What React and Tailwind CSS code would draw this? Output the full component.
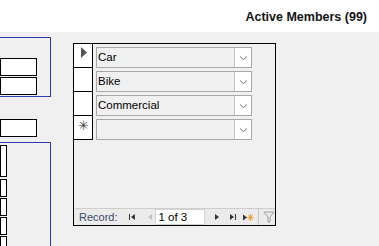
import React from "react";

const Combo = ({ text }) => (
  <div className="mt-[3px] ml-[3px] w-[156px] h-[21px] border border-[#a8a8a8] bg-[#f0f0f0] flex">
    <div className="flex-1 pl-[1px] text-[11.5px] leading-[19px] text-black truncate">{text}</div>
    <div className="w-[17px] h-full border-l border-[#c4c4c4] bg-white flex items-center justify-center">
      <svg width="9" height="6" viewBox="0 0 9 6">
        <path d="M1 1.5 L4.5 4.5 L8 1.5" fill="none" stroke="#7a7a7a" strokeWidth="1" />
      </svg>
    </div>
  </div>
);

const Selector = ({ children }) => (
  <div className="h-[24px] border-b border-black bg-white flex items-start justify-center pt-[3px]">{children}</div>
);

export default function App() {
  return (
    <div className="w-[379px] h-[246px] overflow-hidden bg-[#f0f0f0] font-['Liberation_Sans',Arial,sans-serif]">
      <div className="h-[32px] bg-white flex justify-end pr-[12px] pt-[10px]">
        <span className="text-[12.5px] font-bold leading-[14px] text-[#141414]">Active Members (99)</span>
      </div>
      <div className="flex">
        {/* left column */}
        <div className="w-[51px] pt-[5px] flex flex-col">
          <div className="h-[60px] border-y border-r border-[#2f3cae] pt-[20px]">
            <div className="w-[37px] h-[18px] border border-black bg-white" />
            <div className="mt-[1px] w-[37px] h-[18px] border border-black bg-white" />
          </div>
          <div className="mt-[22px] w-[37px] h-[18px] border border-black bg-white" />
          <div className="mt-[5px] h-[120px] border-t border-r border-[#2f3cae] pt-[2px] flex flex-col gap-[2px]">
            <div className="w-[7px] h-[32px] border border-black bg-white" />
            <div className="w-[7px] h-[18px] border border-black bg-white" />
            <div className="-mt-[1px] w-[7px] h-[18px] border border-black bg-white" />
            <div className="-mt-[1px] w-[7px] h-[18px] border border-black bg-white" />
            <div className="-mt-[1px] w-[7px] h-[18px] border border-black bg-white" />
          </div>
        </div>
        {/* subform */}
        <div className="ml-[22px] mt-[11px] w-[203px] h-[183px] border border-black flex flex-col">
          <div className="flex-1 flex">
            <div className="w-[19px] border-r border-black self-start">
              <Selector>
                <svg width="8" height="11" viewBox="0 0 8 11" className="ml-[1px]">
                  <path d="M1 0 L7 5.5 L1 11 Z" fill="#555" />
                </svg>
              </Selector>
              <Selector />
              <Selector />
              <Selector>
                <span className="text-[13px] leading-[13px] text-[#444]">✳</span>
              </Selector>
            </div>
            <div className="flex flex-col">
              <div className="h-[24px]"><Combo text="Car" /></div>
              <div className="h-[24px]"><Combo text="Bike" /></div>
              <div className="h-[24px]"><Combo text="Commercial" /></div>
              <div className="h-[24px]"><Combo text="" /></div>
            </div>
          </div>
          <div className="h-[17px] border-t border-[#cfcfcf] bg-[#ebebeb] flex items-center overflow-hidden">
            <span className="ml-[5px] text-[11px] leading-[14px] text-[#3b4a6a]">Record:</span>
            <svg width="8" height="8" viewBox="0 0 8 8" className="ml-[10px]">
              <rect x="1" y="1" width="1" height="6" fill="#333" />
              <path d="M7 1 L3 4 L7 7 Z" fill="#333" />
            </svg>
            <svg width="6" height="8" viewBox="0 0 6 8" className="ml-[12px]">
              <path d="M5 1 L1 4 L5 7 Z" fill="#c2c2c2" />
            </svg>
            <div className="ml-[2px] w-[50px] h-[16px] bg-white border border-[#d4d4d4] text-[11.5px] leading-[14px] pl-[2px] text-black">1 of 3</div>
            <svg width="6" height="8" viewBox="0 0 6 8" className="ml-[9px]">
              <path d="M1 1 L5 4 L1 7 Z" fill="#333" />
            </svg>
            <svg width="8" height="8" viewBox="0 0 8 8" className="ml-[9px]">
              <path d="M1 1 L5 4 L1 7 Z" fill="#333" />
              <rect x="6" y="1" width="1" height="6" fill="#333" />
            </svg>
            <svg width="12" height="9" viewBox="0 0 12 9" className="ml-[5px]">
              <path d="M1 1.5 L5 4.5 L1 7.5 Z" fill="#333" />
              <path d="M8.5 1 L8.5 8 M5.5 4.5 L11.5 4.5 M6.5 2 L10.5 7 M10.5 2 L6.5 7" stroke="#f0a030" strokeWidth="1" />
            </svg>
            <div className="ml-[4px] w-[1px] h-[17px] bg-[#c8c8c8]" />
            <svg width="12" height="14" viewBox="0 0 12 14" className="ml-[4px]">
              <path d="M1 2 L11 2 L7 7 L7 12 L5 12 L5 7 Z" fill="none" stroke="#a0a0a0" strokeWidth="1" />
            </svg>
          </div>
        </div>
      </div>
    </div>
  );
}
